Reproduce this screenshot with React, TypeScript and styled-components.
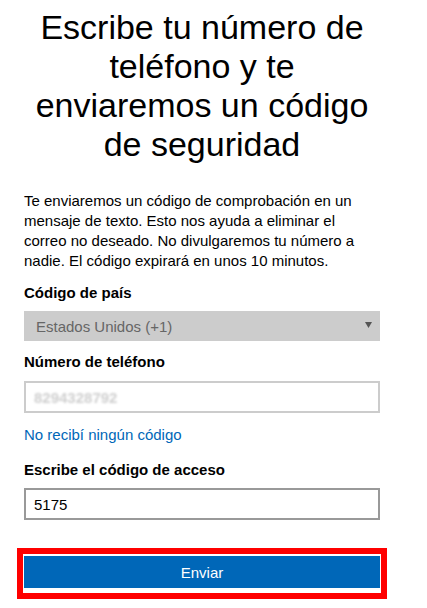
import React from "react";
import styled, { createGlobalStyle } from "styled-components";

const GlobalStyle = createGlobalStyle`
  html, body {
    margin: 0;
    padding: 0;
    background: #fff;
  }
  body {
    font-family: "Liberation Sans", Arial, sans-serif;
    color: #000;
  }
`;

const StyledPage = styled.div`
    width: 356px;
    padding: 8px 0 0 24px;
    display: flex;
    flex-direction: column;
`;

const StyledTitle = styled.h1`
    margin: 0;
    font-size: 34px;
    font-weight: 400;
    line-height: 39px;
    text-align: center;
`;

const StyledDescription = styled.p`
    margin: 27px 0 0;
    font-size: 15px;
    line-height: 20px;
`;

const StyledLabel = styled.label<{ $gap: number }>`
    display: block;
    margin-top: ${(p) => p.$gap}px;
    font-size: 15px;
    line-height: 20px;
    font-weight: 700;
`;

const StyledSelect = styled.div`
    margin-top: 8px;
    height: 30px;
    box-sizing: border-box;
    padding: 0 8px 0 12px;
    background: #cccccc;
    color: #666;
    font-size: 15px;
    display: flex;
    align-items: center;
    justify-content: space-between;

    svg {
      margin-top: -3px;
    }
`;

const StyledField = styled.div<{ $border: string }>`
    margin-top: ${(p) => (p.$border === "#999" ? 8 : 9)}px;
    height: 32px;
    box-sizing: border-box;
    border: 2px solid ${(p) => p.$border};
    padding: 0 8px;
    display: flex;
    align-items: center;
    font-size: 15px;
    color: #000;
`;

const StyledHidden = styled.span`
    color: #cfcfcf;
    filter: blur(1.2px);
    font-weight: 700;
`;

const StyledLink = styled.a`
    display: block;
    margin-top: 12px;
    font-size: 15px;
    line-height: 20px;
    color: #0067b8;
    text-decoration: none;
`;

const StyledHighlight = styled.div`
    margin: 28px 0 0 -7px;
    width: 370px;
    box-sizing: border-box;
    border: 6px solid #ff0000;
    padding: 2px 1px 5px 1px;
`;

const StyledSubmit = styled.button`
    display: block;
    width: 100%;
    height: 32px;
    border: 0;
    background: #0067b8;
    color: #fff;
    font-family: inherit;
    font-size: 15px;
    cursor: pointer;
`;

export default function App(): JSX.Element {
  return (
    <>
      <GlobalStyle />
      <StyledPage>
        <StyledTitle>Escribe tu número de teléfono y te enviaremos un código de seguridad</StyledTitle>
        <StyledDescription>
          Te enviaremos un código de comprobación en un mensaje de texto. Esto nos ayuda a eliminar el
          correo no deseado. No divulgaremos tu número a nadie. El código expirará en unos 10 minutos.
        </StyledDescription>

        <StyledLabel $gap={12}>Código de país</StyledLabel>
        <StyledSelect>
          <span>Estados Unidos (+1)</span>
          <svg width="7" height="6" viewBox="0 0 7 6">
            <path d="M0 0 H7 L3.5 6 Z" fill="#555" />
          </svg>
        </StyledSelect>

        <StyledLabel $gap={11}>Número de teléfono</StyledLabel>
        <StyledField $border="#cccccc">
          <StyledHidden>8294328792</StyledHidden>
        </StyledField>

        <StyledLink href="#">No recibí ningún código</StyledLink>

        <StyledLabel $gap={15}>Escribe el código de acceso</StyledLabel>
        <StyledField $border="#999">5175</StyledField>

        <StyledHighlight>
          <StyledSubmit>Enviar</StyledSubmit>
        </StyledHighlight>
      </StyledPage>
    </>
  );
}
